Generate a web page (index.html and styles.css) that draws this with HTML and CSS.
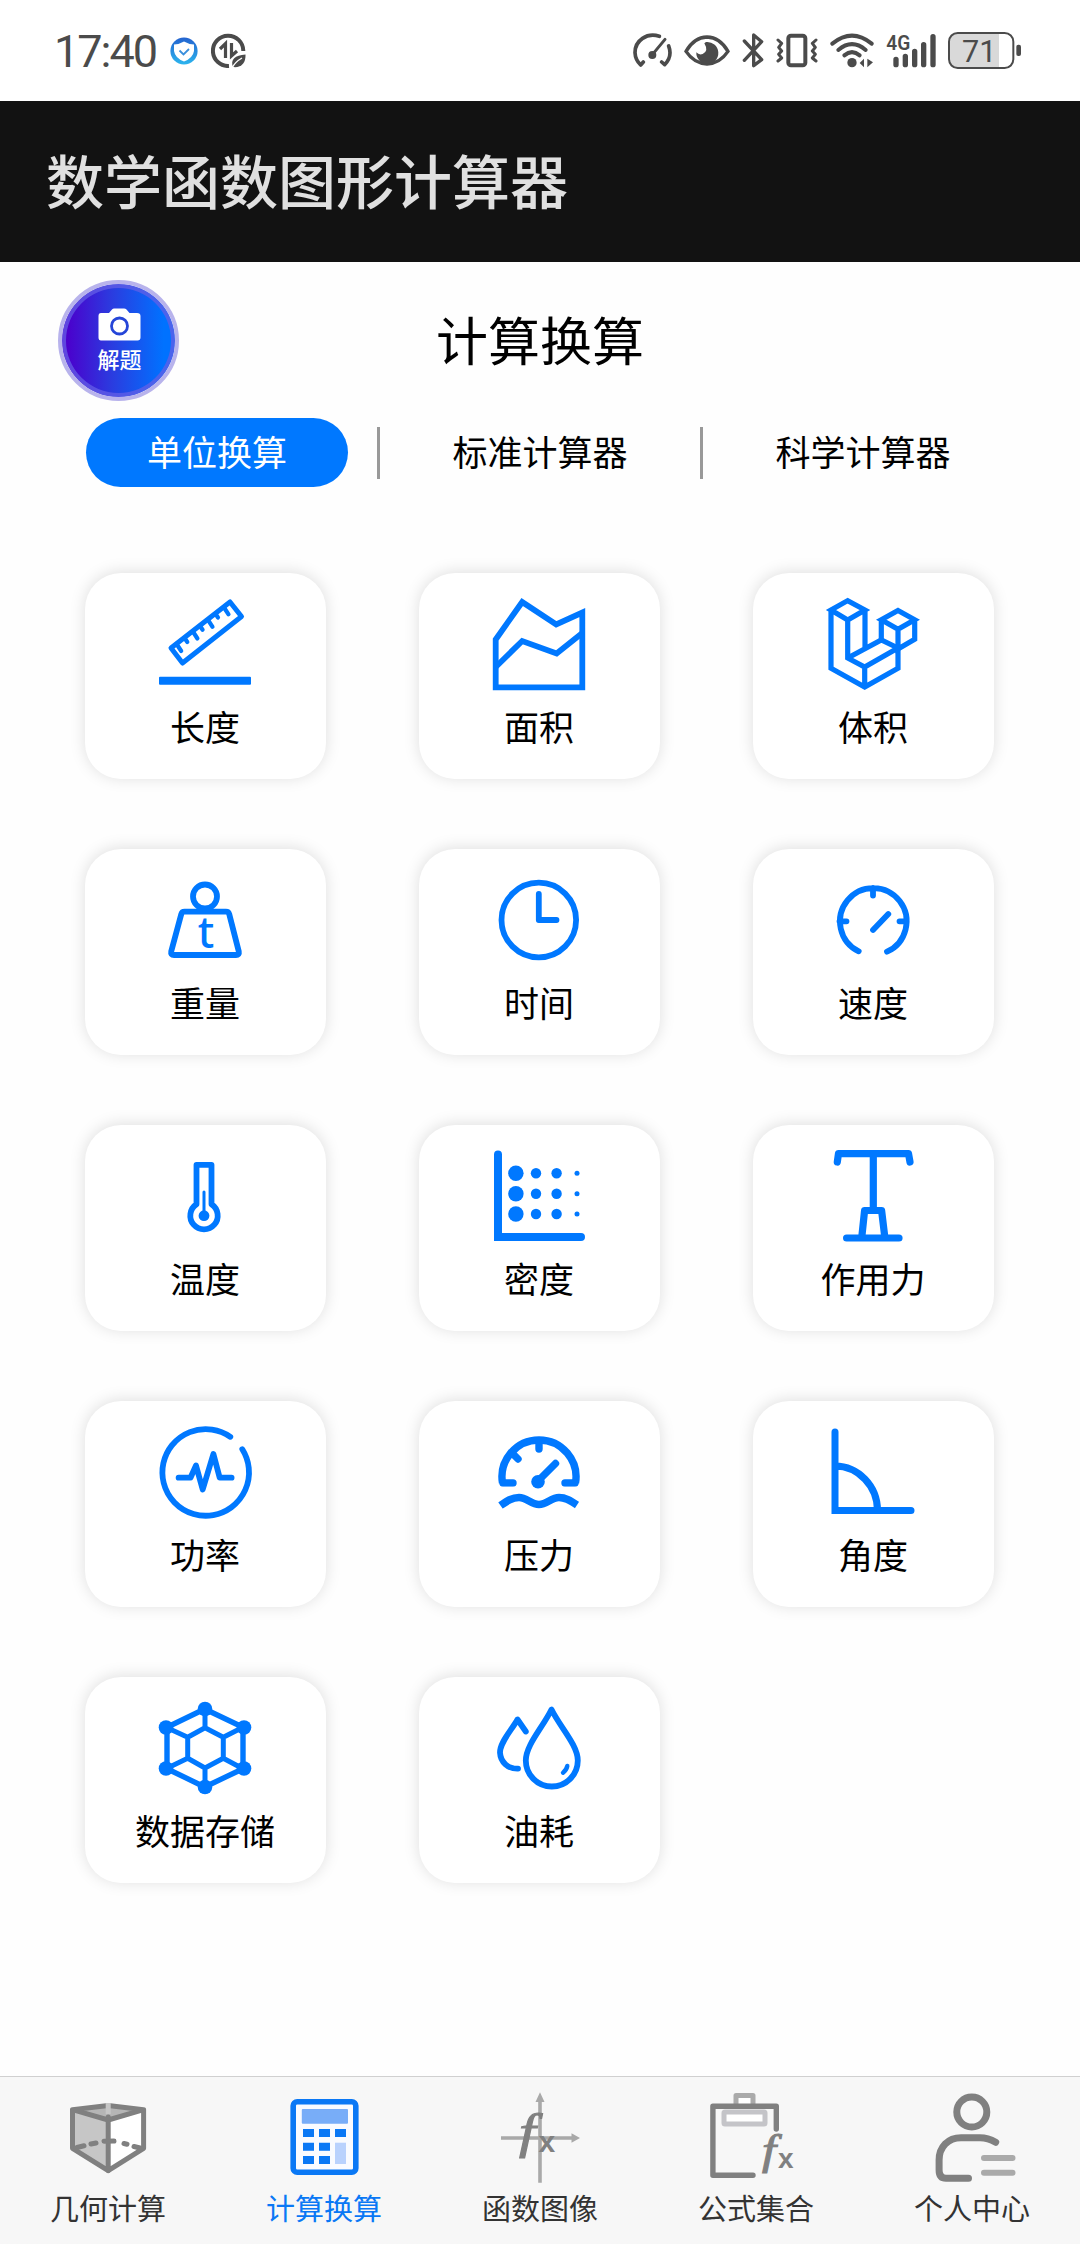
FILE: index.html
```html
<!DOCTYPE html>
<html lang="zh-CN">
<head>
    <meta charset="UTF-8">
    <meta name="viewport" content="width=device-width, initial-scale=1.0">
    <title>数学函数图形计算器</title>
    <link rel="stylesheet" href="styles.css">
</head>
<body>
    <div class="status-bar">
        <div class="status-left">
            <span class="clock">17:40</span>
            <svg class="shield" width="28" height="28" viewBox="0 0 28 28">
                <defs>
                    <linearGradient id="shieldFill" x1="0" y1="0" x2="0" y2="1">
                        <stop offset="0" stop-color="#2463cf"/>
                        <stop offset="1" stop-color="#2cb5ee"/>
                    </linearGradient>
                </defs>
                <circle cx="14" cy="14" r="13.6" fill="url(#shieldFill)"/>
                <path d="M14 4.500Q18 7 24 7.500V14Q23 21 14 24.500Q5 21 4 14V7.500Q10 7 14 4.500z" fill="#fff"/>
                <path d="M9.500 13.500L13.500 17.500L19 12" fill="none" stroke="#3a8fdc" stroke-width="1.800"/>
            </svg>
            <svg width="35" height="35" viewBox="0 0 35 35">
                <path d="M18 33A15.2 15.2 0 1 1 32.3 18" fill="none" stroke="#4b4b4b" stroke-width="4"/>
                <path d="M9 16L14.500 10.500V25M20.500 10V23L26 18" fill="none" stroke="#4b4b4b" stroke-width="3.200"/>
                <path d="M22 34C19 27 24 22 34.500 21.500C35 30 30 35 22 34z" fill="#4b4b4b"/>
                <path d="M21 35Q24 29 31 25" fill="none" stroke="#fff" stroke-width="1.400"/>
            </svg>
        </div>
        <div class="status-right">
            <svg width="40" height="37" viewBox="0 0 120 111">
                <g fill="none" stroke="#4b4b4b" stroke-width="11" stroke-linecap="round" stroke-linejoin="round">
                    <path d="M82 13C45 1 9 25 9 62Q10 84 26 99L34 90"/>
                    <path d="M110 42Q122 74 98 98L89 90"/>
                    <path d="M61 68L99 22" stroke-width="9"/>
                </g>
                <circle cx="61" cy="69" r="12" fill="#4b4b4b"/>
            </svg>
            <svg width="46" height="37" viewBox="0 0 138 111">
                <path d="M6 58Q30 16 69 15Q108 16 132 58Q108 94 69 96Q30 94 6 58z" fill="none" stroke="#4b4b4b" stroke-width="10"/>
                <path d="M66 30A33 33 0 1 1 37 61Q45 70 56 66Q75 58 61 34z" fill="#4b4b4b"/>
            </svg>
            <svg width="22" height="37" viewBox="0 0 66 111">
                <path d="M7 27L59 83L35 101V9L59 29L7 85" fill="none" stroke="#4b4b4b" stroke-width="10" stroke-linecap="round" stroke-linejoin="round"/>
            </svg>
            <svg width="42" height="37" viewBox="0 0 126 111">
                <g fill="none" stroke="#4b4b4b" stroke-linecap="round" stroke-linejoin="round">
                    <rect x="37" y="11" width="51" height="89" rx="8" stroke-width="12"/>
                    <path d="M6 24L17 34L8 46L17 57L8 67L17 78L6 87M120 24L109 34L118 46L109 57L118 67L109 78L120 87" stroke-width="9"/>
                </g>
            </svg>
            <svg width="44" height="37" viewBox="0 0 132 111">
                <g fill="none" stroke="#4b4b4b" stroke-width="12" stroke-linecap="round">
                    <path d="M7 35Q66 -13 125 35"/>
                    <path d="M25 54Q66 19 107 54"/>
                    <path d="M43 70Q66 51 89 70"/>
                </g>
                <circle cx="66" cy="92" r="14" fill="#4b4b4b"/>
                <path d="M89 93L102 80V106zM129 91L112 80V106z" fill="#4b4b4b"/>
            </svg>
            <svg class="signal" width="50" height="37" viewBox="0 0 150 111">
                <text class="net" x="1" y="54" textLength="72" lengthAdjust="spacingAndGlyphs">4G</text>
                <path d="M30 82V98M58 73V98M86 58V98M113 38V98M141 14V98" fill="none" stroke="#4b4b4b" stroke-width="16" stroke-linecap="round"/>
            </svg>
            <svg width="73" height="37" viewBox="0 0 219 111">
                <path d="M22 4H153V107H22Q4 105 4 85V24Q4 5 22 4z" fill="#d9d9d9"/>
                <rect x="3" y="3" width="193" height="105" rx="26" fill="none" stroke="#4b4b4b" stroke-width="6"/>
                <rect x="205" y="38" width="14" height="34" rx="6" fill="#4b4b4b"/>
                <text class="charge" x="94" y="89" text-anchor="middle">71</text>
            </svg>
        </div>
    </div>

    <header class="app-bar">数学函数图形计算器</header>

    <main class="content">
        <div class="page-head">
            <div class="solve-btn">
                <svg width="43" height="33" viewBox="0 0 43 33">
                    <path d="M3 5H11L14 1.500Q15 .5 16 .5H26Q27.500 .5 28.500 1.500L31.500 5H39Q42.500 5 42.500 8V29.500Q42.500 32.500 39.500 32.500H3Q.5 32.500 .5 29.500V8Q.5 5 3 5z" fill="#fff"/>
                    <circle cx="21.500" cy="18" r="8" fill="#fff" stroke="#2545d8" stroke-width="2.800"/>
                </svg>
                <span>解题</span>
            </div>
            <h1>计算换算</h1>
        </div>

        <div class="tabs">
            <div class="tab active">单位换算</div>
            <div class="divider"></div>
            <div class="tab">标准计算器</div>
            <div class="divider"></div>
            <div class="tab">科学计算器</div>
        </div>

        <div class="grid">
            <div class="card">
                <svg class="icon" viewBox="0 0 92 92">
                    <path d="M12 50L71 4L82.500 18.500L23.500 65z" stroke-width="5"/>
                    <path d="M17.600 46L22.200 53M25.500 40L28.300 44M33.900 33.500L38.400 40.500M41 28L43.600 31.800M49 21.800L53.500 28.800M56.500 16L59 19.500M65 9.500L69.500 16.300" stroke-width="4.200"/>
                    <rect class="solid" x="0" y="78.700" width="92" height="8" rx="1"/>
                </svg>
                <span>长度</span>
            </div>
            <div class="card">
                <svg class="icon sharp" viewBox="0 0 92 92">
                    <path d="M2.700 41.500L29.200 4L63.200 26.500L89.300 14.500V89.300H2.700z"/>
                    <path d="M2.700 69L29.200 43L63.600 55.500L89.300 35"/>
                </svg>
                <span>面积</span>
            </div>
            <div class="card">
                <svg class="icon sharp" viewBox="0 0 92 92">
                    <path d="M4 12L20.700 2.600L38 12L20.700 22zM4 12V70.300L37.700 89L71 70.300V51M20.700 22V60L37.700 69L71 50M37.700 69V89M38 12V49.700M20.700 60L54.300 42L71 50" stroke-width="5.200"/>
                    <path d="M71 12.500L87.700 21.700L71 31.300L54.300 21.700zM54.300 21.700V42M71 31.300V51L87.700 41.300V21.700" stroke-width="5.200"/>
                </svg>
                <span>体积</span>
            </div>

            <div class="card">
                <svg class="icon" viewBox="0 0 92 92">
                    <circle cx="46" cy="22.500" r="12"/>
                    <path d="M25.500 37.700H67Q69.500 37.700 70.200 40L79.800 77.500Q80.500 81 77 81H15Q11.500 81 12.200 77.500L22.300 40Q23 37.700 25.500 37.700z"/>
                    <text class="ton" x="47" y="74" text-anchor="middle">t</text>
                </svg>
                <span>重量</span>
            </div>
            <div class="card">
                <svg class="icon" viewBox="0 0 92 92">
                    <circle cx="45.800" cy="46" r="37.300"/>
                    <path d="M45.800 20V46H63.500"/>
                </svg>
                <span>时间</span>
            </div>
            <div class="card">
                <svg class="icon" viewBox="0 0 92 92">
                    <path d="M31.700 77.300A33.300 33.300 0 1 1 60 77.700M46 14V21.500M12.500 47.300H19.500M72.500 47.300H79M46 56L61.300 40"/>
                </svg>
                <span>速度</span>
            </div>

            <div class="card">
                <svg class="icon" viewBox="0 0 92 92">
                    <path d="M37.500 54.200V14.800H52.500V54.200A13.700 13.700 0 1 1 37.500 54.200z"/>
                    <path d="M45 42V64" stroke-width="3"/>
                    <circle class="solid" cx="45" cy="65.700" r="5.400"/>
                </svg>
                <span>温度</span>
            </div>
            <div class="card">
                <svg class="icon sharp" viewBox="0 0 92 92">
                    <path d="M5 4.500V87H88" stroke-width="8" stroke-linecap="round"/>
                    <g class="solid">
                        <circle cx="22.900" cy="23.300" r="7.700"/>
                        <circle cx="22.900" cy="43.700" r="7.700"/>
                        <circle cx="22.900" cy="64" r="7.700"/>
                        <circle cx="43" cy="23.300" r="5.200"/>
                        <circle cx="43" cy="43.700" r="5.200"/>
                        <circle cx="43" cy="64" r="5.200"/>
                        <circle cx="63.600" cy="23.300" r="5.200"/>
                        <circle cx="63.600" cy="43.700" r="5.200"/>
                        <circle cx="63.600" cy="64" r="5.200"/>
                        <circle cx="84" cy="23.300" r="2.500"/>
                        <circle cx="84" cy="43.700" r="2.500"/>
                        <circle cx="84" cy="64" r="2.500"/>
                    </g>
                </svg>
                <span>密度</span>
            </div>
            <div class="card">
                <svg class="icon" viewBox="0 0 92 92">
                    <path d="M10.300 12L11.500 3.600H81.500L83 12M46.300 3.600V58M34.800 87L37.600 60.500H54.600L57.800 87M19.600 88H72" stroke-width="7.200"/>
                </svg>
                <span>作用力</span>
            </div>

            <div class="card">
                <svg class="icon" viewBox="0 0 92 92">
                    <path d="M83.300 23.300A43.300 43.300 0 1 1 71.300 10.800M19.600 51.700H31.500L37 39.500L43.700 63.500L54.400 28L60.700 51.700H72.600"/>
                </svg>
                <span>功率</span>
            </div>
            <div class="card">
                <svg class="icon" viewBox="0 0 92 92">
                    <path d="M9.500 57A37 37 0 1 1 82.500 57" stroke-width="7.400" stroke-linecap="butt"/>
                    <path d="M10 57H20M72 57H82M46 15V23M20 28L25 33M45 55L62.500 37.500" stroke-width="7.400"/>
                    <path class="cover" d="M0 60.800H92V68H0z"/>
                    <circle class="solid" cx="45" cy="55.700" r="6.800"/>
                    <path d="M7.500 79.500C14 75 19 71.500 26 71.500C34 71.500 38 78.500 46 78.500C54 78.500 58 71.500 66 71.500C73 71.500 78 75 84 79" stroke-width="7.600" stroke-linecap="butt"/>
                </svg>
                <span>压力</span>
            </div>
            <div class="card">
                <svg class="icon sharp" viewBox="0 0 92 92">
                    <path d="M8 6V84.500H84M8 40A43 44.500 0 0 1 50.500 84.500" stroke-width="7" stroke-linecap="round"/>
                </svg>
                <span>角度</span>
            </div>

            <div class="card">
                <svg class="icon" viewBox="0 0 92 92">
                    <path d="M45.700 7L84 25.300V66.700L45.700 85L8 66.700V25.300z" stroke-width="5.400"/>
                    <path d="M46 25.700L64.300 35.300V56.300L46 66L28.700 56.300V35.300zM46 6V25.700M84 25.300L64.300 35.300M84 66.700L64.300 56.300M46 86V66M7 66.700L28.700 56.300M7 25.300L28.700 35.300" stroke-width="5"/>
                    <g class="solid">
                        <circle cx="46" cy="7" r="7.300"/>
                        <circle cx="85" cy="25.500" r="7.300"/>
                        <circle cx="85" cy="66.500" r="7.300"/>
                        <circle cx="46" cy="85" r="7.300"/>
                        <circle cx="7" cy="66.500" r="7.300"/>
                        <circle cx="7" cy="25.500" r="7.300"/>
                    </g>
                </svg>
                <span>数据存储</span>
            </div>
            <div class="card">
                <svg class="icon" viewBox="0 0 92 92">
                    <path d="M58.500 7.500C50 25 32.800 43 32.800 58.500A26 26 0 0 0 84.800 58.500C84.800 43 67 25 58.500 7.500z"/>
                    <path d="M32.800 29.500L24.500 17.500C18 29 7 40 7 50.500C7.500 60 15 67 25 66.700"/>
                    <path d="M74.300 64Q73.500 68 70 70.700" stroke-width="4.400"/>
                </svg>
                <span>油耗</span>
            </div>
        </div>
    </main>

    <nav class="tab-bar">
        <div class="nav-item">
            <svg width="96" height="96" viewBox="0 0 96 96">
                <path d="M12.500 19.700L48.200 30V80.700L12.500 58.300z" fill="#c6c6c6"/>
                <path d="M83.600 19.700L48.200 30V80.700L83.600 58.300z" fill="#fff"/>
                <path d="M12.500 19.700L48.200 14.300L83.600 19.700L48.200 30z" fill="#b5b5b5"/>
                <g fill="none" stroke="#808080" stroke-width="5" stroke-linejoin="round" stroke-linecap="round">
                    <path d="M12.500 19.700L48.200 30L83.600 19.700V58.300L48.200 80.700L12.500 58.300zL48.200 15.500L83.600 19.700M48.200 27V80.700"/>
                    <path d="M17 57.500L24 55.800M31 54L36 53M44 51.300L54 51M64 53.500L67 54.200M74 56.500L80 58"/>
                </g>
                <path d="M48.200 13V24" stroke="#c6c6c6" stroke-width="5"/>
            </svg>
            <span>几何计算</span>
        </div>
        <div class="nav-item active">
            <svg width="96" height="96" viewBox="0 0 96 96">
                <rect x="17.200" y="11.700" width="62.600" height="70.600" rx="4" fill="#f9fbff" stroke="#0a78f5" stroke-width="5.600"/>
                <rect x="25.800" y="19" width="46.200" height="14.700" rx="1" fill="#78adf8"/>
                <path d="M27 39h11v8h-11zM43 39h11v8h-11zM59 39h11v8h-11zM27 52.700h11v8h-11zM43 52.700h11v8h-11zM27 66h11v8h-11zM43 66h11v8h-11z" fill="#0a78f5"/>
                <path d="M59 52.700h11V74h-11z" fill="#b9d2fd"/>
            </svg>
            <span>计算换算</span>
        </div>
        <div class="nav-item">
            <svg width="96" height="96" viewBox="0 0 96 96">
                <path d="M48 8V92.700M9 48H82" stroke="#a9a9a9" stroke-width="3.600"/>
                <path d="M48 2.300L52.500 12H43.500zM88 48L79.500 52.800V43.200z" fill="#a9a9a9"/>
                <text class="fn" transform="translate(27 57.500) scale(1.250 1)" font-size="48">f</text>
                <text class="var" x="46.500" y="62" font-size="30">x</text>
            </svg>
            <span>函数图像</span>
        </div>
        <div class="nav-item">
            <svg width="96" height="96" viewBox="0 0 96 96">
                <path d="M28 17V5.500H45V17" fill="#fff" stroke="#aaa" stroke-width="5" stroke-linejoin="round"/>
                <rect x="16" y="22" width="41" height="12" rx="1" fill="#fff" stroke="#c4c4c8" stroke-width="5"/>
                <path d="M68.300 39V16.300H4.900V85.300H45" fill="none" stroke="#808080" stroke-width="5.400" stroke-linecap="round" stroke-linejoin="round"/>
                <text class="fn" transform="translate(54 74) scale(1.200 1)" font-size="42">f</text>
                <text class="var" x="70" y="78" font-size="28">x</text>
            </svg>
            <span>公式集合</span>
        </div>
        <div class="nav-item">
            <svg width="96" height="96" viewBox="0 0 96 96">
                <g fill="none" stroke="#808080" stroke-width="7" stroke-linecap="round">
                    <circle cx="47.800" cy="22" r="15"/>
                    <path d="M71.700 52.300Q64 47.700 56 47.700H37C24 47.700 15.100 57 15.100 70V80Q15.100 88.300 22 88.300H44.500"/>
                </g>
                <path d="M60 68H88.500M60 82.700H88.500" stroke="#aaa" stroke-width="6" stroke-linecap="round"/>
            </svg>
            <span>个人中心</span>
        </div>
    </nav>
</body>
</html>
```

FILE: styles.css
```css
* {
    box-sizing: border-box;
}
body {
    font-family: "Noto Sans CJK SC", "Noto Sans", sans-serif;
    display: flex;
    flex-direction: column;
    height: 2244px;
    margin: 0;
    background-color: #fefefe;
    color: #000;
}
svg {
    display: block;
    flex-shrink: 0;
}

/* status bar */
.status-bar {
    display: flex;
    justify-content: space-between;
    height: 101px;
    padding: 0 59px 0 54px;
    background-color: #fff;
}
.status-left, .status-right {
    display: flex;
    align-items: center;
}
.status-right {
    gap: 12px;
}
.clock {
    width: 104px;
    margin-right: 12px;
    padding-top: 2px;
    font-family: Roboto, sans-serif;
    font-size: 45px;
    letter-spacing: -2px;
    color: #4b4b4b;
}
.shield {
    margin-right: 13px;
}
.signal {
    overflow: visible;
}
.net {
    font-family: Roboto, sans-serif;
    font-size: 62px;
    font-weight: 600;
    fill: #4b4b4b;
}
.charge {
    font-family: Roboto, sans-serif;
    font-size: 92px;
    fill: #4b4b4b;
}

/* title bar */
.app-bar {
    height: 161px;
    padding-left: 46px;
    background-color: #121212;
    color: #e0e0e0;
    font-size: 58px;
    font-weight: 500;
    line-height: 157px;
}

.content {
    flex: 1;
}
.page-head {
    position: relative;
    height: 156px;
}
.page-head h1 {
    margin: 0;
    font-size: 52px;
    font-weight: 400;
    line-height: 153px;
    text-align: center;
}
.solve-btn {
    position: absolute;
    top: 18px;
    left: 58px;
    display: flex;
    flex-direction: column;
    align-items: center;
    width: 121px;
    height: 121px;
    padding: 24px 0 0 2px;
    border: 4px solid #b8b3ec;
    border-radius: 50%;
    background: linear-gradient(90deg, #4b00cc 4%, #2a3de0 45%, #0072ff 90%) padding-box;
    box-shadow: inset 0 0 0 4px rgba(100, 95, 230, 0.75);
    color: #fff;
}
.solve-btn span {
    margin-top: 2px;
    font-size: 22px;
    font-weight: 500;
    line-height: 30px;
}

.tabs {
    display: flex;
    align-items: center;
    gap: 29px;
    padding-left: 86px;
}
.tab {
    width: 262px;
    height: 69px;
    border-radius: 35px;
    font-size: 35px;
    line-height: 66px;
    text-align: center;
}
.tab.active {
    background-color: #0078ff;
    color: #fff;
}
.divider {
    width: 3px;
    height: 52px;
    background-color: #999;
}

/* unit cards */
.grid {
    display: grid;
    grid-template-columns: repeat(3, 241px);
    gap: 70px 93px;
    padding: 86px 0 0 85px;
}
.card {
    display: flex;
    flex-direction: column;
    align-items: center;
    height: 206px;
    padding: 25px 1px 0 0;
    border-radius: 36px;
    background-color: #fff;
    box-shadow: 0 -1px 16px rgba(0, 0, 0, 0.13);
}
.card span {
    margin-top: 11px;
    font-size: 35px;
    line-height: 50px;
}
.icon {
    width: 92px;
    height: 92px;
    margin-right: 1px;
    overflow: visible;
    fill: none;
    stroke: #0078ff;
    stroke-width: 5.8;
    stroke-linecap: round;
    stroke-linejoin: round;
}
.icon.sharp {
    stroke-linecap: butt;
    stroke-linejoin: miter;
}
.icon .solid {
    fill: #0078ff;
    stroke: none;
}
.icon .cover {
    fill: #fff;
    stroke: none;
}
.ton {
    font-family: "Noto Sans", sans-serif;
    font-size: 43px;
    font-weight: 500;
    fill: #0078ff;
    stroke: none;
}

/* bottom navigation */
.tab-bar {
    display: flex;
    height: 168px;
    border-top: 1px solid #d0d0d0;
    background-color: #f7f7f7;
}
.nav-item {
    display: flex;
    flex: 1;
    flex-direction: column;
    align-items: center;
    padding-top: 13px;
    color: #333;
    font-size: 29px;
    line-height: 40px;
}
.nav-item span {
    margin-top: 1px;
}
.nav-item.active {
    color: #0a78f5;
}
.fn {
    font-family: "Liberation Serif", serif;
    font-style: italic;
    fill: #808080;
    stroke: #808080;
    stroke-width: 1;
}
.var {
    font-family: "Liberation Sans", sans-serif;
    font-weight: bold;
    fill: #808080;
}
```
